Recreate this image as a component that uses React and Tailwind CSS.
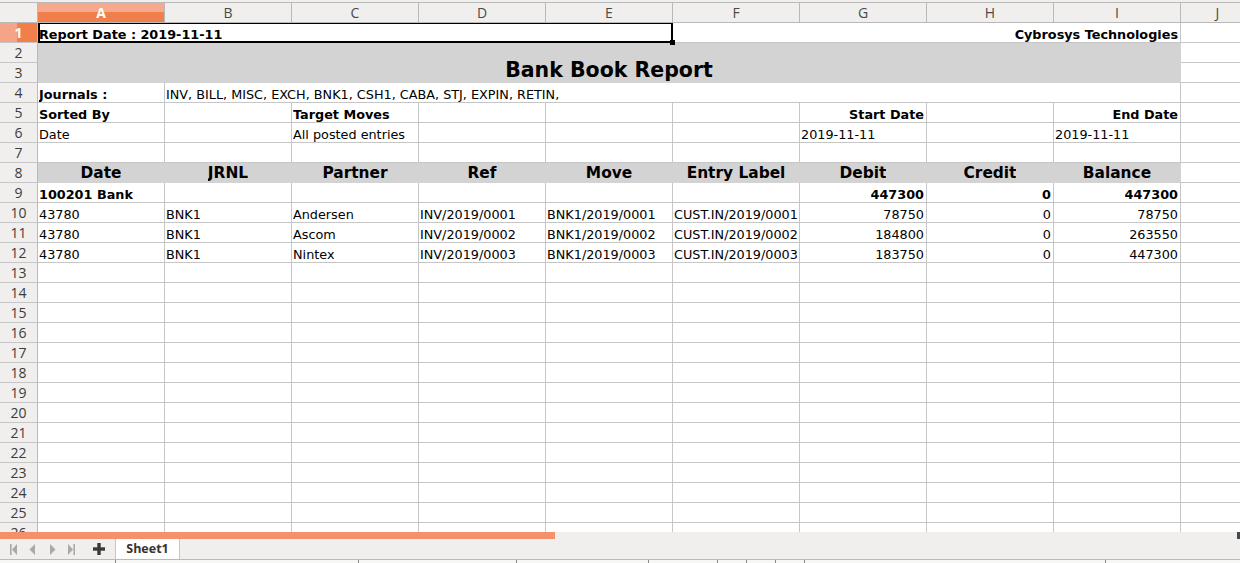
import React from 'react';

const W = {
  1: 'w-[127px]',
  4: 'w-[508px]',
  5: 'w-[635px]',
  8: 'w-[1016px]',
  9: 'w-[1143px]',
};

const SZ = {
  base: 'text-[12.8px] leading-[15px]',
  head: 'text-[15.4px] leading-[18px]',
  title: 'text-[20.5px] leading-[24px]',
};

function Cell({ span = 1, children, align = 'left', bold = false, gray = false, size = 'base', sel = false }) {
  const justify =
    align === 'right' ? 'justify-end pr-[2px]' : align === 'center' ? 'justify-center' : 'justify-start pl-[1px]';
  return (
    <div
      className={`${W[span]} shrink-0 h-full flex items-end ${justify} border-r border-b relative ${
        sel ? 'z-10' : ''
      } ${gray ? 'bg-[#d3d3d3] border-[#d3d3d3]' : 'bg-white border-[#c6c6c6]'}`}
    >
      <span className={`${SZ[size]} ${bold ? 'font-bold' : 'font-normal'} whitespace-nowrap text-black overflow-hidden`}>
        {children}
      </span>
      {sel && (
        <>
          <div className="absolute -top-px left-0 -right-px -bottom-px border-2 border-black pointer-events-none" />
          <div className="absolute -right-[3px] -bottom-[3px] w-[5px] h-[5px] bg-black" />
        </>
      )}
    </div>
  );
}

function RowHead({ n, active = false }) {
  return (
    <div
      className={`w-[38px] shrink-0 h-[20px] border-r border-b flex items-center justify-center text-[14px] font-['Open_Sans',sans-serif] ${
        active
          ? 'bg-[linear-gradient(to_right,#f6a487_46%,#f07f4b_46%)] text-white font-bold border-r-[#b9b9b9] border-b-[#c6c6c6]'
          : 'bg-[#f0efed] text-[#3c3c3c] border-r-[#b9b9b9] border-b-[#c6c6c6]'
      }`}
    >
      {n}
    </div>
  );
}

function Row({ n, active, children }) {
  return (
    <div className="flex h-[20px] shrink-0">
      <RowHead n={n} active={active} />
      {children}
      <Cell />
    </div>
  );
}

const data = [
  ['43780', 'BNK1', 'Andersen', 'INV/2019/0001', 'BNK1/2019/0001', 'CUST.IN/2019/0001', '78750', '0', '78750'],
  ['43780', 'BNK1', 'Ascom', 'INV/2019/0002', 'BNK1/2019/0002', 'CUST.IN/2019/0002', '184800', '0', '263550'],
  ['43780', 'BNK1', 'Nintex', 'INV/2019/0003', 'BNK1/2019/0003', 'CUST.IN/2019/0003', '183750', '0', '447300'],
];

const heads = ['Date', 'JRNL', 'Partner', 'Ref', 'Move', 'Entry Label', 'Debit', 'Credit', 'Balance'];
const letters = ['B', 'C', 'D', 'E', 'F', 'G', 'H', 'I'];

function Empty({ count }) {
  return Array.from({ length: count }).map((_, i) => <Cell key={i} />);
}

export default function App() {
  return (
    <div className="w-[1240px] h-[563px] overflow-hidden bg-white flex flex-col font-['DejaVu_Sans',sans-serif]">
      {/* top strip */}
      <div className="h-[2px] shrink-0 bg-[#f0efed]" />
      {/* column headers */}
      <div className="flex h-[21px] shrink-0 border-t border-b border-[#b9b9b9] bg-[#f0efed] font-['Open_Sans',sans-serif]">
        <div className="w-[38px] shrink-0 h-full border-r border-[#b9b9b9]" />
        <div className="w-[127px] shrink-0 h-full border-r border-[#b9b9b9] flex items-center justify-center text-[14px] font-bold text-white bg-[linear-gradient(to_bottom,#f6a98c_48%,#f07f4b_48%)]">
          A
        </div>
        {letters.map((l) => (
          <div
            key={l}
            className="w-[127px] shrink-0 h-full border-r border-[#b9b9b9] flex items-center justify-center text-[14px] text-[#4a4a4a]"
          >
            {l}
          </div>
        ))}
        <div className="w-[74px] shrink-0 h-full border-r border-[#b9b9b9] flex items-center justify-center text-[14px] text-[#4a4a4a]">
          J
        </div>
      </div>

      {/* grid body */}
      <div className="h-[509px] shrink-0 overflow-hidden flex flex-col">
        <Row n={1} active>
          <Cell span={5} bold sel>
            Report Date : 2019-11-11
          </Cell>
          <Cell span={4} bold align="right">
            Cybrosys Technologies
          </Cell>
        </Row>

        <div className="flex h-[40px] shrink-0">
          <div className="flex flex-col shrink-0">
            <RowHead n={2} />
            <RowHead n={3} />
          </div>
          <Cell span={9} gray bold align="center" size="title">
            Bank Book Report
          </Cell>
          <div className="flex flex-col shrink-0">
            <div className="h-[20px]">
              <Cell />
            </div>
            <div className="h-[20px]">
              <Cell />
            </div>
          </div>
        </div>

        <Row n={4}>
          <Cell bold>Journals :</Cell>
          <Cell span={8}>INV, BILL, MISC, EXCH, BNK1, CSH1, CABA, STJ, EXPIN, RETIN,</Cell>
        </Row>

        <Row n={5}>
          <Cell bold>Sorted By</Cell>
          <Cell />
          <Cell bold>Target Moves</Cell>
          <Cell />
          <Cell />
          <Cell />
          <Cell bold align="right">
            Start Date
          </Cell>
          <Cell />
          <Cell bold align="right">
            End Date
          </Cell>
        </Row>

        <Row n={6}>
          <Cell>Date</Cell>
          <Cell />
          <Cell>All posted entries</Cell>
          <Cell />
          <Cell />
          <Cell />
          <Cell>2019-11-11</Cell>
          <Cell />
          <Cell>2019-11-11</Cell>
        </Row>

        <Row n={7}>
          <Empty count={9} />
        </Row>

        <Row n={8}>
          {heads.map((h) => (
            <Cell key={h} gray bold align="center" size="head">
              {h}
            </Cell>
          ))}
        </Row>

        <Row n={9}>
          <Cell bold>100201 Bank</Cell>
          <Empty count={5} />
          <Cell bold align="right">
            447300
          </Cell>
          <Cell bold align="right">
            0
          </Cell>
          <Cell bold align="right">
            447300
          </Cell>
        </Row>

        {data.map((r, i) => (
          <Row key={i} n={10 + i}>
            {r.map((v, j) => (
              <Cell key={j} align={j >= 6 ? 'right' : 'left'}>
                {v}
              </Cell>
            ))}
          </Row>
        ))}

        {Array.from({ length: 14 }).map((_, i) => (
          <Row key={'e' + i} n={13 + i}>
            <Empty count={9} />
          </Row>
        ))}
      </div>

      {/* horizontal scrollbar */}
      <div className="h-[7px] shrink-0 flex bg-[#f0efed]">
        <div className="w-[555px] h-full bg-[#f4916b]" />
        <div className="flex-1" />
        <div className="w-[3px] h-full bg-[#4a4a4a]" />
      </div>

      {/* sheet tab bar */}
      <div className="h-[21px] shrink-0 flex items-stretch bg-[#f0efed] border-b border-[#b9b9b9] font-['Open_Sans',sans-serif]">
        <div className="flex items-center">
          <svg className="ml-[10px]" width="7" height="11" viewBox="0 0 7 11">
            <rect x="0" y="0" width="1.6" height="11" fill="#a9a9a9" />
            <polygon points="7,0 2,5.5 7,11" fill="#a9a9a9" />
          </svg>
          <svg className="ml-[12px]" width="7" height="11" viewBox="0 0 7 11">
            <polygon points="6,0 0.5,5.5 6,11" fill="#a9a9a9" />
          </svg>
          <svg className="ml-[13px]" width="7" height="11" viewBox="0 0 7 11">
            <polygon points="1,0 6.5,5.5 1,11" fill="#a9a9a9" />
          </svg>
          <svg className="ml-[12px]" width="7" height="11" viewBox="0 0 7 11">
            <polygon points="0,0 5,5.5 0,11" fill="#a9a9a9" />
            <rect x="5.4" y="0" width="1.6" height="11" fill="#a9a9a9" />
          </svg>
          <svg className="ml-[18px]" width="12" height="12" viewBox="0 0 12 12">
            <rect x="4.3" y="0" width="3.4" height="12" fill="#3a3a3a" />
            <rect x="0" y="4.3" width="12" height="3.4" fill="#3a3a3a" />
          </svg>
        </div>
        <div className="ml-[10px] w-[65px] bg-white border-l border-r border-[#c6c6c6] flex items-center justify-center text-[12.5px] font-bold text-[#333]">
          Sheet1
        </div>
      </div>

      {/* status strip */}
      <div className="h-[3px] shrink-0 flex bg-[#f7f7f6]">
        <div className="w-[115px] shrink-0" />
        <div className="w-[243px] shrink-0 border-l border-[#8a8a8a]" />
        <div className="w-[158px] shrink-0 border-l border-[#8a8a8a]" />
        <div className="w-[132px] shrink-0 border-l border-[#8a8a8a]" />
        <div className="w-[69px] shrink-0 border-l border-[#8a8a8a]" />
        <div className="w-[29px] shrink-0 border-l border-[#8a8a8a]" />
        <div className="w-[29px] shrink-0 border-l border-[#8a8a8a]" />
        <div className="w-[29px] shrink-0 border-l border-[#8a8a8a]" />
        <div className="w-[301px] shrink-0 border-l border-[#8a8a8a]" />
        <div className="flex-1 border-l border-[#8a8a8a]" />
      </div>
    </div>
  );
}
